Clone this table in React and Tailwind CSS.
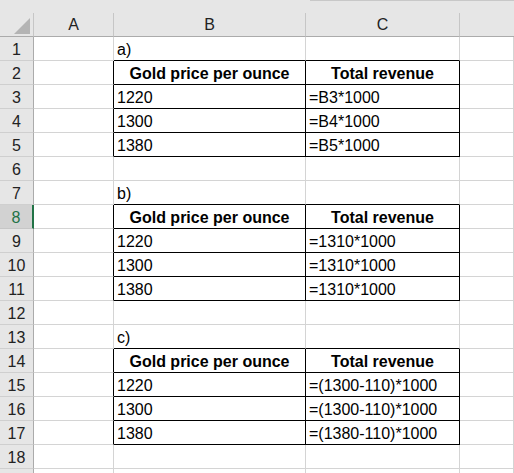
const rows = {
  1: { b: "a)" },
  2: { b: "Gold price per ounce", c: "Total revenue", head: true },
  3: { b: "1220", c: "=B3*1000" },
  4: { b: "1300", c: "=B4*1000" },
  5: { b: "1380", c: "=B5*1000" },
  7: { b: "b)" },
  8: { b: "Gold price per ounce", c: "Total revenue", head: true },
  9: { b: "1220", c: "=1310*1000" },
  10: { b: "1300", c: "=1310*1000" },
  11: { b: "1380", c: "=1310*1000" },
  13: { b: "c)" },
  14: { b: "Gold price per ounce", c: "Total revenue", head: true },
  15: { b: "1220", c: "=(1300-110)*1000" },
  16: { b: "1300", c: "=(1300-110)*1000" },
  17: { b: "1380", c: "=(1380-110)*1000" },
};

const tableRows = [2, 3, 4, 5, 8, 9, 10, 11, 14, 15, 16, 17];
const inTable = (r) => tableRows.includes(r);

function RowHeader({ n }) {
  if (n === 8) {
    return (
      <div className="h-[24px] bg-[#d2d2d2] border-b border-b-[#c6c6c6] border-r-2 border-r-[#217346] flex items-center justify-center text-[#217346] leading-[23px] pt-px">
        {n}
      </div>
    );
  }
  return (
    <div className="h-[24px] bg-[#e6e6e6] border-b border-b-[#cfcfcf] border-r border-r-[#ababab] flex items-center justify-center text-[#222] leading-[23px] pt-px">
      {n < 19 ? n : ""}
    </div>
  );
}

function Cell({ children, right, bottom, bold, center }) {
  return (
    <div
      className={
        "h-[24px] border-r border-b flex items-center overflow-visible whitespace-nowrap leading-[23px] pt-px " +
        (right ? "border-r-black " : "border-r-[#d4d4d4] ") +
        (bottom ? "border-b-black " : "border-b-[#d4d4d4] ") +
        (bold ? "font-bold " : "") +
        (center ? "justify-center" : "pl-[3px]")
      }
    >
      {children}
    </div>
  );
}

export default function App() {
  const list = Array.from({ length: 19 }, (_, i) => i + 1);

  return (
    <div className="w-[514px] h-[473px] overflow-hidden bg-white text-black text-[16px] font-['Liberation_Sans',Arial,sans-serif]">
      <div className="h-[13px] bg-[#e6e6e6] flex">
        <div className="w-[310px]" />
        <div className="flex-1 border-t border-t-[#c8c8c8]" />
      </div>
      <div className="grid grid-cols-[34px_80px_192px_154px_1fr] h-[24px] bg-[#e6e6e6] text-[#222]">
        <div className="border-r border-r-[#c6c6c6] border-b border-b-[#ababab] flex justify-end items-end pr-[3px] pb-[2px]">
          <svg width="16" height="16" viewBox="0 0 16 16">
            <polygon points="16,0 16,16 0,16" fill="#b4b4b4" />
          </svg>
        </div>
        {["A", "B", "C", ""].map((l, i) => (
          <div
            key={i}
            className={
              "border-b border-b-[#ababab] flex items-center justify-center leading-[23px] " +
              (i < 3 ? "border-r border-r-[#c6c6c6]" : "")
            }
          >
            {l}
          </div>
        ))}
      </div>
      <div className="grid grid-cols-[34px_80px_192px_154px_1fr]">
        {list.map((r) => {
          const d = rows[r] || {};
          const t = inTable(r);
          const nextT = inTable(r + 1);
          return [
            <RowHeader key={r + "h"} n={r} />,
            <Cell key={r + "a"} right={t} />,
            <Cell key={r + "b"} right={t} bottom={t || nextT} bold={d.head} center={d.head}>
              {d.b}
            </Cell>,
            <Cell key={r + "c"} right={t} bottom={t || nextT} bold={d.head} center={d.head}>
              {d.c}
            </Cell>,
            <Cell key={r + "d"} />,
          ];
        })}
      </div>
    </div>
  );
}
